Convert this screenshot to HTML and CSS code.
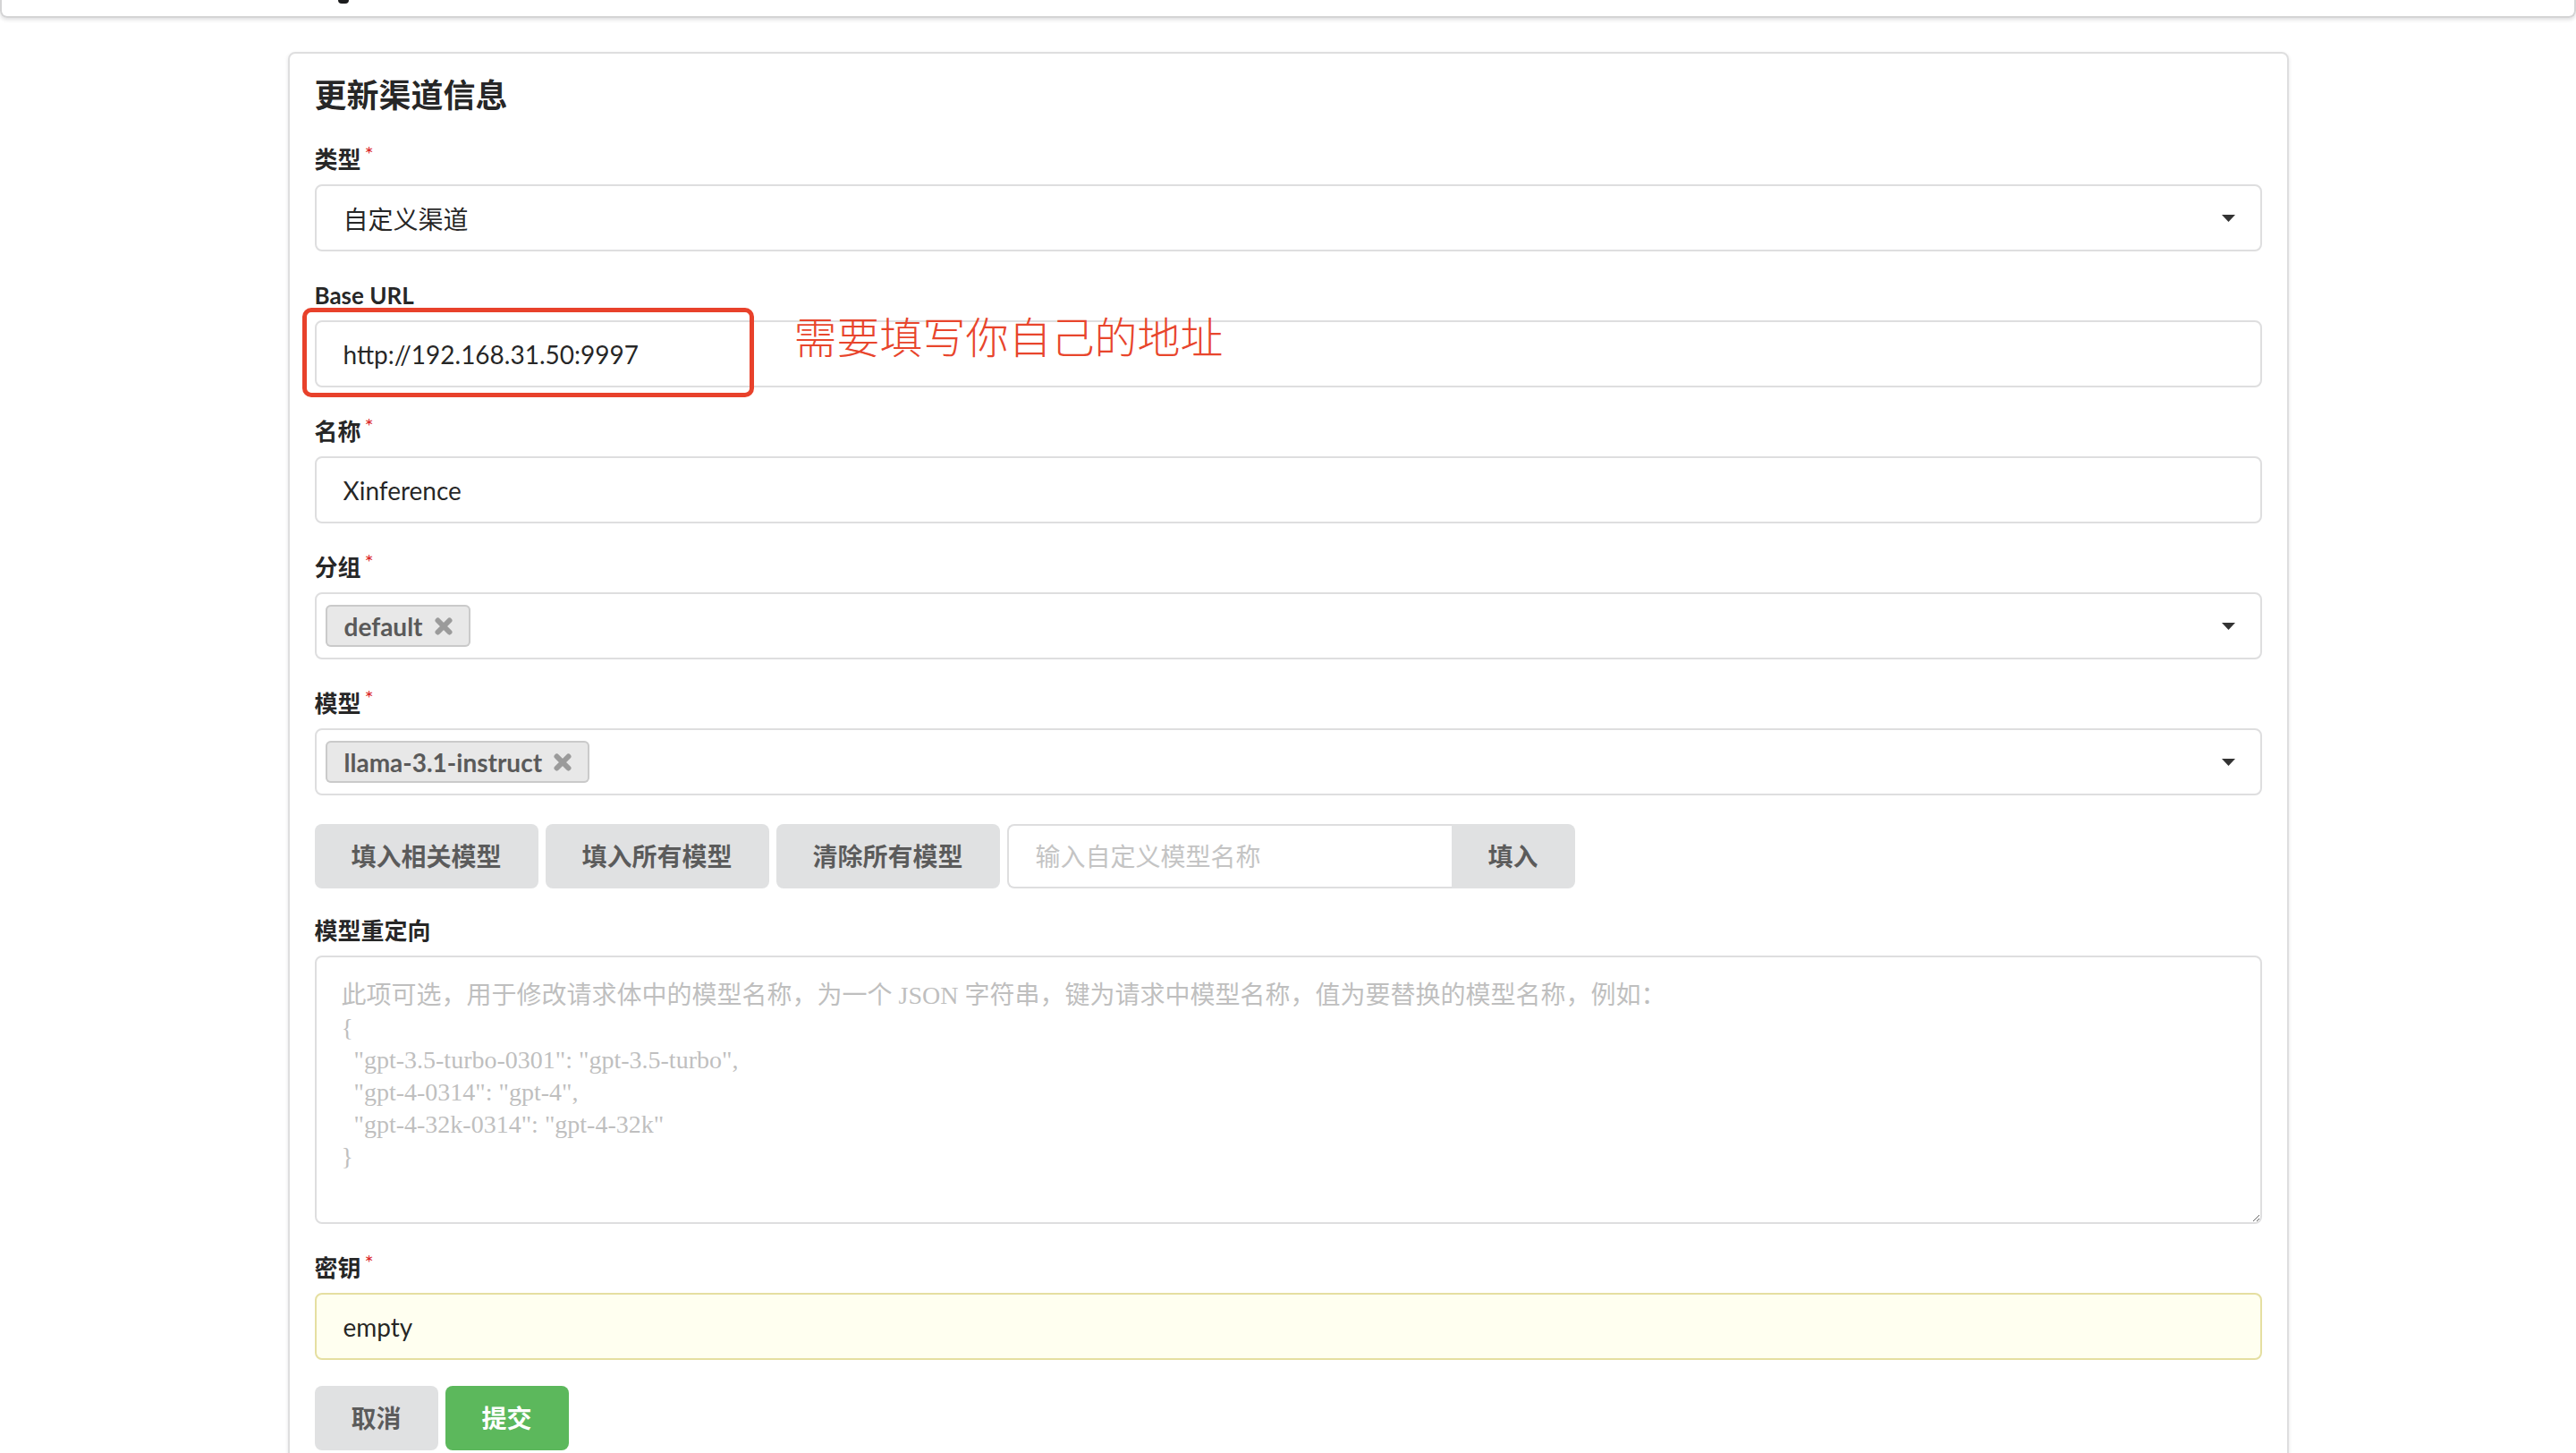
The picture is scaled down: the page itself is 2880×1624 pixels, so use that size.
FILE: index.html
```html
<!DOCTYPE html>
<html lang="zh-CN">
<head>
    <meta charset="UTF-8">
    <meta name="viewport" content="width=device-width, initial-scale=1.0">
    <title>更新渠道信息</title>
    <link rel="stylesheet" href="styles.css">
</head>
<body>

<div class="topbar"><span class="topbar-icon"></span></div>

<div class="container">
    <div class="segment">
        <h3 class="title">更新渠道信息</h3>

        <form class="form" onsubmit="return false">
            <div class="field required">
                <label>类型</label>
                <div class="dropdown">
                    <span class="dropdown-text">自定义渠道</span>
                    <svg class="caret" width="15" height="8" viewBox="0 0 15 8"><path d="M0 0h15L7.5 8z" fill="#333"/></svg>
                </div>
            </div>

            <div class="field">
                <label>Base URL</label>
                <div class="input-wrap">
                    <input class="input" type="text" value="http://192.168.31.50:9997">
                    <div class="mark"></div>
                    <span class="note">需要填写你自己的地址</span>
                </div>
            </div>

            <div class="field required">
                <label>名称</label>
                <input class="input" type="text" value="Xinference">
            </div>

            <div class="field required">
                <label>分组</label>
                <div class="dropdown multiple">
                    <span class="tag">default
                        <svg class="tag-x" width="20" height="20" viewBox="0 0 20 20"><path d="M3.5 3.5L16.5 16.5M16.5 3.5L3.5 16.5" stroke="#9b9b9b" stroke-width="6" stroke-linecap="round"/></svg>
                    </span>
                    <svg class="caret" width="15" height="8" viewBox="0 0 15 8"><path d="M0 0h15L7.5 8z" fill="#333"/></svg>
                </div>
            </div>

            <div class="field required">
                <label>模型</label>
                <div class="dropdown multiple">
                    <span class="tag">llama-3.1-instruct
                        <svg class="tag-x" width="20" height="20" viewBox="0 0 20 20"><path d="M3.5 3.5L16.5 16.5M16.5 3.5L3.5 16.5" stroke="#9b9b9b" stroke-width="6" stroke-linecap="round"/></svg>
                    </span>
                    <svg class="caret" width="15" height="8" viewBox="0 0 15 8"><path d="M0 0h15L7.5 8z" fill="#333"/></svg>
                </div>
            </div>

            <div class="model-actions">
                <button class="btn" type="button">填入相关模型</button>
                <button class="btn" type="button">填入所有模型</button>
                <button class="btn" type="button">清除所有模型</button>
                <div class="action-input">
                    <input type="text" placeholder="输入自定义模型名称">
                    <button class="btn" type="button">填入</button>
                </div>
            </div>

            <div class="field">
                <label>模型重定向</label>
                <textarea class="textarea" placeholder="此项可选，用于修改请求体中的模型名称，为一个 JSON 字符串，键为请求中模型名称，值为要替换的模型名称，例如：&#10;{&#10;  &quot;gpt-3.5-turbo-0301&quot;: &quot;gpt-3.5-turbo&quot;,&#10;  &quot;gpt-4-0314&quot;: &quot;gpt-4&quot;,&#10;  &quot;gpt-4-32k-0314&quot;: &quot;gpt-4-32k&quot;&#10;}"></textarea>
            </div>

            <div class="field required">
                <label>密钥</label>
                <input class="input autofill" type="text" value="empty">
            </div>

            <div class="form-buttons">
                <button class="btn" type="button">取消</button>
                <button class="btn positive" type="submit">提交</button>
            </div>
        </form>
    </div>
</div>

</body>
</html>
```

FILE: styles.css
```css
html, body {
    margin: 0;
}
body {
    font-family: Lato, "Noto Sans CJK SC", sans-serif;
    font-size: 28px;
    color: rgba(0, 0, 0, 0.87);
    background-color: #fff;
    overflow: hidden;
}
.topbar {
    height: 18px;
    border: 2px solid #d4d4d5;
    border-top: none;
    border-radius: 0 0 8px 8px;
    box-shadow: 0 2px 4px rgba(34, 36, 38, 0.15);
    padding-left: 376px;
}
.topbar-icon {
    display: block;
    width: 12px;
    height: 4px;
    background-color: #1b1c1d;
    border-radius: 0 0 6px 6px;
}
.container {
    width: 2237px;
    margin: 38px auto 0;
}
.segment {
    border: 2px solid #dededf;
    border-radius: 8px;
    box-shadow: 0 2px 4px rgba(34, 36, 38, 0.12);
    padding: 26px 28px 40px;
}
.title {
    margin: 0 0 32px;
    font-size: 36px;
    line-height: 40px;
    font-weight: 700;
}
.field {
    margin-bottom: 29px;
}
.field > label {
    display: block;
    font-size: 26px;
    line-height: 40px;
    font-weight: 700;
    margin-bottom: 8px;
}
.field.required > label::after {
    content: '*';
    color: #db2828;
    margin: -6px 0 0 4px;
    display: inline-block;
    vertical-align: top;
    font-size: 24px;
    font-weight: 400;
}
.input {
    display: block;
    width: 100%;
    height: 75px;
    box-sizing: border-box;
    padding: 0 30px;
    border: 2px solid #dededf;
    border-radius: 8px;
    font-family: Lato, "Noto Sans CJK SC", sans-serif;
    font-size: 28px;
    color: rgba(0, 0, 0, 0.87);
    background-color: #fff;
    outline: none;
}
.input.autofill {
    background-color: #fffff0;
    border-color: #e5dfa1;
}
.input-wrap {
    position: relative;
}
.mark {
    position: absolute;
    left: -14px;
    top: -14px;
    width: 495px;
    height: 90px;
    border: 5px solid #e8412b;
    border-radius: 10px;
}
.note {
    position: absolute;
    left: 536px;
    top: -8px;
    font-family: "Noto Sans CJK SC", sans-serif;
    font-size: 48px;
    font-weight: 300;
    line-height: 48px;
    color: #e8452c;
    white-space: nowrap;
}
.dropdown {
    display: flex;
    align-items: center;
    height: 75px;
    box-sizing: border-box;
    padding: 0 28px 0 30px;
    border: 2px solid #dededf;
    border-radius: 8px;
}
.dropdown.multiple {
    padding-left: 10px;
}
.caret {
    margin-left: auto;
}
.tag {
    display: inline-flex;
    align-items: center;
    gap: 13px;
    height: 47px;
    box-sizing: border-box;
    padding: 0 20px 0 21px;
    background-color: #e8e8e8;
    box-shadow: inset 0 0 0 2px #cacaca;
    border-radius: 6px;
    font-weight: 700;
    color: #5a5a5a;
}
.model-actions {
    display: flex;
    gap: 8px;
    margin: 32px 0 27px;
}
.btn {
    height: 72px;
    padding: 0 41px;
    border: none;
    border-radius: 8px;
    background-color: #e0e1e2;
    color: rgba(0, 0, 0, 0.6);
    font-family: Lato, "Noto Sans CJK SC", sans-serif;
    font-size: 28px;
    font-weight: 700;
    line-height: 1;
    cursor: pointer;
}
.btn.positive {
    background-color: #5cb85c;
    color: #fff;
}
.action-input {
    display: flex;
}
.action-input input {
    width: 497px;
    height: 72px;
    box-sizing: border-box;
    padding: 0 30px;
    border: 2px solid #dededf;
    border-right: none;
    border-radius: 8px 0 0 8px;
    font-family: Lato, "Noto Sans CJK SC", sans-serif;
    font-size: 28px;
    outline: none;
}
.action-input input::placeholder {
    color: #c4c4c4;
}
.action-input .btn {
    border-radius: 0 8px 8px 0;
}
.textarea {
    display: block;
    width: 100%;
    height: 300px;
    box-sizing: border-box;
    padding: 25px 28px;
    border: 2px solid #dededf;
    border-radius: 8px;
    font-family: "Liberation Serif", "Noto Sans CJK SC", serif;
    font-size: 28px;
    line-height: 36px;
    resize: vertical;
    outline: none;
}
.textarea::placeholder {
    color: #bfbfbf;
}
.form-buttons {
    display: flex;
    gap: 8px;
}
```
